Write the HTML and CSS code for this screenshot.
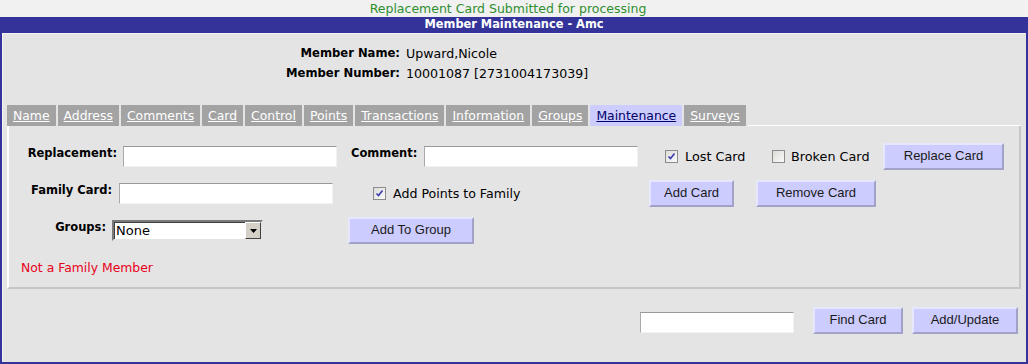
FILE: index.html
```html
<!DOCTYPE html>
<html lang="en">
<head>
  <meta charset="UTF-8">
  <title>Member Maintenance</title>
  <link rel="stylesheet" href="styles.css">
</head>
<body>
  <div class="notice">Replacement Card Submitted for processing</div>
  <div class="titlebar">Member Maintenance - Amc</div>

  <div class="frame">
    <div class="member">
      <span class="member-label">Member Name:</span><span class="member-value">Upward,Nicole</span>
      <span class="member-label">Member Number:</span><span class="member-value">10001087 [2731004173039]</span>
    </div>

    <div class="tabs">
      <a class="tab" href="#">Name</a>
      <a class="tab" href="#">Address</a>
      <a class="tab" href="#">Comments</a>
      <a class="tab" href="#">Card</a>
      <a class="tab" href="#">Control</a>
      <a class="tab" href="#">Points</a>
      <a class="tab" href="#">Transactions</a>
      <a class="tab" href="#">Information</a>
      <a class="tab" href="#">Groups</a>
      <a class="tab active" href="#">Maintenance</a>
      <a class="tab" href="#">Surveys</a>
      <span class="tabs-rest"></span>
    </div>

    <div class="panel">
      <div class="row">
        <span class="label lbl-replacement">Replacement:</span>
        <input class="field field-replacement" type="text">
        <span class="label lbl-comment">Comment:</span>
        <input class="field field-comment" type="text">
        <span class="check check-lost checked">
          <svg width="11" height="11" viewBox="0 0 11 11"><path d="M2.5 5.5 L4.5 7.5 L8.5 2.5" fill="none" stroke="#3b3bb0" stroke-width="1.6"/></svg>
        </span>
        <span class="check-text text-lost">Lost Card</span>
        <span class="check check-broken"></span>
        <span class="check-text text-broken">Broken Card</span>
        <button class="btn btn-replace">Replace Card</button>
      </div>

      <div class="row">
        <span class="label lbl-family">Family Card:</span>
        <input class="field field-family" type="text">
        <span class="check check-points checked">
          <svg width="11" height="11" viewBox="0 0 11 11"><path d="M2.5 5.5 L4.5 7.5 L8.5 2.5" fill="none" stroke="#3b3bb0" stroke-width="1.6"/></svg>
        </span>
        <span class="check-text text-points">Add Points to Family</span>
        <button class="btn btn-addcard">Add Card</button>
        <button class="btn btn-remove">Remove Card</button>
      </div>

      <div class="row">
        <span class="label lbl-groups">Groups:</span>
        <div class="select">
          <span class="select-text">None</span>
          <span class="select-arrow">
            <svg width="7" height="4" viewBox="0 0 7 4"><path d="M0 0 H7 L3.5 4 Z" fill="#000"/></svg>
          </span>
        </div>
        <button class="btn btn-group">Add To Group</button>
      </div>

      <div class="status">Not a Family Member</div>
    </div>

    <div class="footer-row">
      <input class="field field-find" type="text">
      <button class="btn btn-find">Find Card</button>
      <button class="btn btn-update">Add/Update</button>
    </div>
  </div>
</body>
</html>
```

FILE: styles.css
```css
* {
  margin: 0;
  padding: 0;
  box-sizing: border-box;
}

body {
  background-color: #f1f1f1;
  font-family: 'DejaVu Sans', Verdana, sans-serif;
  font-size: 12.5px;
  color: #000;
  overflow: hidden;
}

.notice {
  height: 17px;
  line-height: 17px;
  padding-right: 12px;
  text-align: center;
  color: #2f8f2f;
  font-size: 12.5px;
}

.titlebar {
  height: 16px;
  line-height: 15px;
  background-color: #333399;
  color: #fff;
  font-weight: bold;
  font-size: 11.4px;
  text-align: center;
}

.frame {
  height: 331px;
  background-color: #e4e4e4;
  border: 2px solid #333399;
  border-top: none;
  box-shadow: inset 1px 1px 0 #f4f4f4;
}

/* member header */
.member {
  display: grid;
  grid-template-columns: 398px 1fr;
  grid-auto-rows: 20px;
  align-items: center;
  padding-top: 10px;
  font-size: 12.6px;
}

.member-label {
  font-weight: bold;
  font-size: 11.6px;
  text-align: right;
}

.member-value {
  padding-left: 6px;
}

/* tabs */
.tabs {
  display: flex;
  gap: 2px;
  margin: 22px 5px 0 5px;
  height: 21px;
}

.tab {
  display: block;
  height: 21px;
  line-height: 21px;
  padding: 0 6px;
  background-color: #a3a3a3;
  color: #fff;
  font-size: 12.4px;
  text-decoration: underline;
}

.tab.active {
  background-color: #ccccff;
  color: #000066;
}

.tabs-rest {
  flex: 1;
  align-self: flex-end;
  border-bottom: 1px solid #fff;
}

/* panel */
.panel {
  display: flex;
  flex-direction: column;
  gap: 10px;
  height: 163px;
  margin: 0 5px;
  padding-top: 17px;
  border-left: 2px solid #fff;
  border-right: 2px solid #c6c6c6;
  border-bottom: 2px solid #c6c6c6;
}

.row {
  display: flex;
  align-items: center;
  height: 27px;
}

.label {
  align-self: flex-start;
  margin-top: 3px;
  line-height: 14px;
  font-size: 11.5px;
  font-weight: bold;
  text-align: right;
}

.lbl-replacement { width: 108px; }
.lbl-comment { width: 66px; margin-left: 14px; text-align: left; }
.lbl-family { width: 103px; }
.lbl-groups { width: 97px; }

.field {
  height: 21px;
  background-color: #fff;
  border: 1px solid;
  border-color: #999 #f2f2f2 #f2f2f2 #aaa;
  outline: none;
}

.field-replacement { width: 214px; margin-left: 6px; }
.field-comment { width: 214px; margin-left: 7px; }
.field-family { width: 214px; margin-left: 7px; }

.check {
  display: flex;
  align-items: center;
  justify-content: center;
  width: 13px;
  height: 13px;
  border: 1px solid #8c8c8c;
  background: linear-gradient(135deg, #dcdcd6, #fafafa);
}

.check-lost { margin-left: 27px; }
.check-broken { margin-left: 26px; }
.check-points { margin-left: 40px; }

.check-text {
  margin-left: 7px;
  white-space: nowrap;
  font-size: 12.8px;
}

.text-lost { width: 61px; }
.text-broken { width: 79px; margin-left: 6px; }
.text-points { width: 127px; font-size: 12.6px; }

.btn {
  height: 27px;
  background-color: #ccccff;
  border: 2px solid;
  border-color: #e6e6ff #a2a2c8 #a2a2c8 #e6e6ff;
  font-family: 'Liberation Sans', Arial, sans-serif;
  font-size: 13px;
  color: #1a1a1a;
  padding-bottom: 2px;
}

.btn-replace { width: 121px; margin-left: 13px; align-self: flex-start; }
.btn-addcard { width: 85px; margin-left: 129px; }
.btn-remove { width: 120px; margin-left: 22px; }
.btn-group { width: 126px; margin-left: 85px; }

/* fake select */
.select {
  display: flex;
  align-items: center;
  width: 151px;
  height: 21px;
  margin-left: 6px;
  background-color: #fff;
  border: 2px solid;
  border-color: #7a7a7a #e4e4e4 #e4e4e4 #7a7a7a;
  box-shadow: inset 1px 1px 0 #404040;
}

.select-text {
  flex: 1;
  padding-left: 2px;
  font-size: 13px;
}

.select-arrow {
  display: flex;
  align-items: center;
  justify-content: center;
  width: 16px;
  height: 17px;
  background-color: #d4d0c8;
  border: 1px solid;
  border-color: #fff #404040 #404040 #fff;
}

.status {
  margin-left: 12px;
  margin-top: 7px;
  line-height: 14px;
  font-size: 12.4px;
  color: #e8001a;
}

/* bottom row */
.footer-row {
  display: flex;
  justify-content: flex-end;
  align-items: flex-start;
  margin-top: 18px;
  padding-right: 8px;
}

.field-find { width: 154px; margin-top: 5px; }
.btn-find { width: 90px; margin-left: 19px; }
.btn-update { width: 106px; margin-left: 9px; }
```
